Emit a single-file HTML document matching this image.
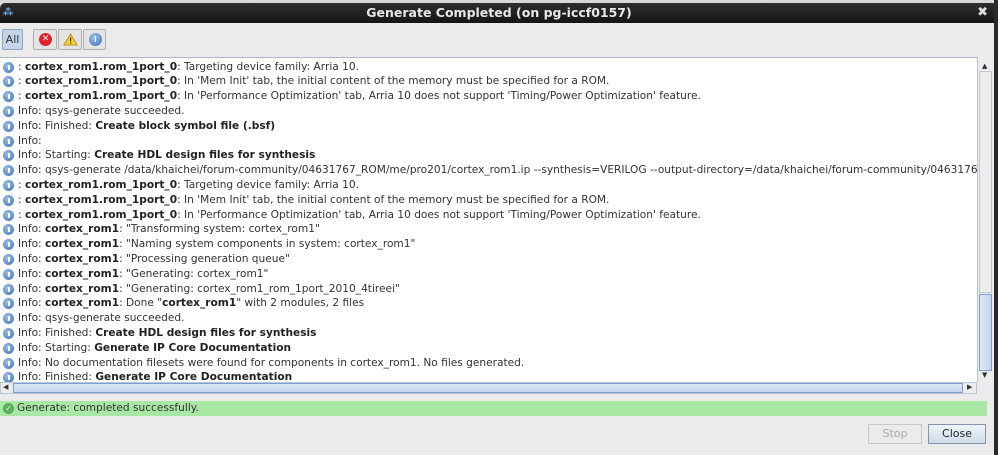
<!DOCTYPE html>
<html><head><meta charset="utf-8"><style>
*{margin:0;padding:0;box-sizing:border-box}
body{width:998px;height:455px;background:#ebebeb;position:relative;overflow:hidden;font-family:"DejaVu Sans","Liberation Sans",sans-serif;font-size:10.6px;color:#333}
.top{position:absolute;left:0;top:0;width:998px;height:4px;background:#d8d8d8}
.title{position:absolute;left:0;top:3px;width:998px;height:20px;background:linear-gradient(#2e2e2e,#151515);color:#e8e8e8;font-weight:bold;font-size:12.5px;text-align:center;line-height:20px;border-radius:5px 5px 0 0}
.x{position:absolute;right:10px;top:0;color:#ddd;font-size:13px}
.tb{position:absolute;top:29px;height:21px;border:1px solid #b0b0b0;background:#e4e4e4;border-radius:2px}
.log{position:absolute;left:0;top:57px;width:977px;height:325px;background:#fff;border-top:1px solid #a9b9cc;overflow:hidden}
.r{position:absolute;left:0;white-space:nowrap;height:15px;line-height:15px;padding-left:18px}
.r i{position:absolute;left:3px;top:2px;width:11px;height:11px;border-radius:50%;background:radial-gradient(circle at 40% 35%,#9cc0ea,#3a6fb5);}
.r i:after{content:"";position:absolute;left:5px;top:3px;width:1.5px;height:5px;background:#fff}
b{color:#222}
.vs{position:absolute;left:977px;top:57px;width:17px;height:325px;background:#ececec;border-left:1px solid #b8c6d6}
.hs{position:absolute;left:0;top:382px;width:977px;height:12px;background:#ececec;border:1px solid #b8c6d6}
.green{position:absolute;left:0;top:401px;width:987px;height:15px;background:#a9e7a5;line-height:15px;padding-left:17px;color:#333}
.btn{position:absolute;top:424px;height:20px;border:1px solid #a8a8a8;text-align:center;line-height:18px;font-size:11px}
</style></head><body>
<div class="top"></div>
<div class="title">Generate Completed (on pg-iccf0157)<span class="x">✖</span><span style="position:absolute;left:3px;top:0;color:#6fa8e8;font-size:10px">⁂</span></div>
<div class="tb" style="left:2px;width:21px;background:#c5d5e8;border-color:#8aa4c4;font-size:11px;line-height:19px;text-align:center;color:#333">All</div>
<div class="tb" style="left:33px;width:24px"><div style="position:absolute;left:5px;top:3px;width:13px;height:13px;border-radius:50%;background:#e0232b;color:#fff;font-size:9px;font-weight:bold;text-align:center;line-height:13px">✕</div></div>
<div class="tb" style="left:58px;width:24px"><svg style="position:absolute;left:4px;top:3px" width="15" height="13"><path d="M7.5 1L14 12H1Z" fill="#f5d33a" stroke="#c09010"/><rect x="7" y="4.5" width="1.2" height="4" fill="#333"/><rect x="7" y="9.5" width="1.2" height="1.2" fill="#333"/></svg></div>
<div class="tb" style="left:83px;width:23px"><div style="position:absolute;left:5px;top:3px;width:13px;height:13px;border-radius:50%;background:radial-gradient(circle at 40% 35%,#9cc0ea,#3a6fb5)"><div style="position:absolute;left:5.8px;top:3px;width:1.5px;height:6px;background:#fff"></div></div></div>
<div class="log">
<div class="r" style="top:-13px"><i></i>: <b>cortex_rom1.rom_1port_0</b>: ...</div>
<div class="r" style="top:1.5px"><i></i>: <b>cortex_rom1.rom_1port_0</b>: Targeting device family: Arria 10.</div>
<div class="r" style="top:16.3px"><i></i>: <b>cortex_rom1.rom_1port_0</b>: In 'Mem Init' tab, the initial content of the memory must be specified for a ROM.</div>
<div class="r" style="top:31.1px"><i></i>: <b>cortex_rom1.rom_1port_0</b>: In 'Performance Optimization' tab, Arria 10 does not support 'Timing/Power Optimization' feature.</div>
<div class="r" style="top:45.9px"><i></i>Info: qsys-generate succeeded.</div>
<div class="r" style="top:60.7px"><i></i>Info: Finished: <b>Create block symbol file (.bsf)</b></div>
<div class="r" style="top:75.5px"><i></i>Info:</div>
<div class="r" style="top:90.3px"><i></i>Info: Starting: <b>Create HDL design files for synthesis</b></div>
<div class="r" style="top:105.1px"><i></i>Info: qsys-generate /data/khaichei/forum-community/04631767_ROM/me/pro201/cortex_rom1.ip --synthesis=VERILOG --output-directory=/data/khaichei/forum-community/04631767_ROM</div>
<div class="r" style="top:119.9px"><i></i>: <b>cortex_rom1.rom_1port_0</b>: Targeting device family: Arria 10.</div>
<div class="r" style="top:134.7px"><i></i>: <b>cortex_rom1.rom_1port_0</b>: In 'Mem Init' tab, the initial content of the memory must be specified for a ROM.</div>
<div class="r" style="top:149.5px"><i></i>: <b>cortex_rom1.rom_1port_0</b>: In 'Performance Optimization' tab, Arria 10 does not support 'Timing/Power Optimization' feature.</div>
<div class="r" style="top:164.3px"><i></i>Info: <b>cortex_rom1</b>: "Transforming system: cortex_rom1"</div>
<div class="r" style="top:179.1px"><i></i>Info: <b>cortex_rom1</b>: "Naming system components in system: cortex_rom1"</div>
<div class="r" style="top:193.9px"><i></i>Info: <b>cortex_rom1</b>: "Processing generation queue"</div>
<div class="r" style="top:208.7px"><i></i>Info: <b>cortex_rom1</b>: "Generating: cortex_rom1"</div>
<div class="r" style="top:223.5px"><i></i>Info: <b>cortex_rom1</b>: "Generating: cortex_rom1_rom_1port_2010_4tireei"</div>
<div class="r" style="top:238.3px"><i></i>Info: <b>cortex_rom1</b>: Done "<b>cortex_rom1</b>" with 2 modules, 2 files</div>
<div class="r" style="top:253.1px"><i></i>Info: qsys-generate succeeded.</div>
<div class="r" style="top:267.9px"><i></i>Info: Finished: <b>Create HDL design files for synthesis</b></div>
<div class="r" style="top:282.7px"><i></i>Info: Starting: <b>Generate IP Core Documentation</b></div>
<div class="r" style="top:297.5px"><i></i>Info: No documentation filesets were found for components in cortex_rom1. No files generated.</div>
<div class="r" style="top:312.3px"><i></i>Info: Finished: <b>Generate IP Core Documentation</b></div>
</div>
<div class="vs">
<div style="position:absolute;left:4px;top:5px;font-size:7px;color:#333">▲</div>
<div style="position:absolute;left:1px;top:14px;width:13px;height:222px;border:1px solid #b8c6d6;background:#ececec"></div>
<div style="position:absolute;left:1px;top:237px;width:13px;height:77px;border:1px solid #7d9fd0;background:linear-gradient(90deg,#dde8f5,#c5d7ee)"></div>
<div style="position:absolute;left:4px;top:314px;font-size:7px;color:#333">▼</div>
</div>
<div class="hs">
<div style="position:absolute;left:2px;top:0;font-size:7px;color:#333">◀</div>
<div style="position:absolute;left:12px;top:0;width:950px;height:10px;border:1px solid #7d9fd0;background:linear-gradient(#dde8f5,#c5d7ee)"></div>
<div style="position:absolute;left:966px;top:0;font-size:7px;color:#333">▶</div>
</div>
<div style="position:absolute;left:994px;top:0;width:4px;height:455px;background:#2a2a2a"></div>
<div class="green"><span style="position:absolute;left:3px;top:2px;width:11px;height:11px;border-radius:50%;background:#58b058;color:#fff;font-size:8px;line-height:11px;text-align:center">✓</span>Generate: completed successfully.</div>
<div class="btn" style="left:868px;width:54px;color:#aaa;border-color:#c8c8c8">Stop</div>
<div class="btn" style="left:928px;width:58px;background:linear-gradient(#f0f4f9,#cfdbe9);border-color:#7f95b0;color:#222">Close</div>
</body></html>
